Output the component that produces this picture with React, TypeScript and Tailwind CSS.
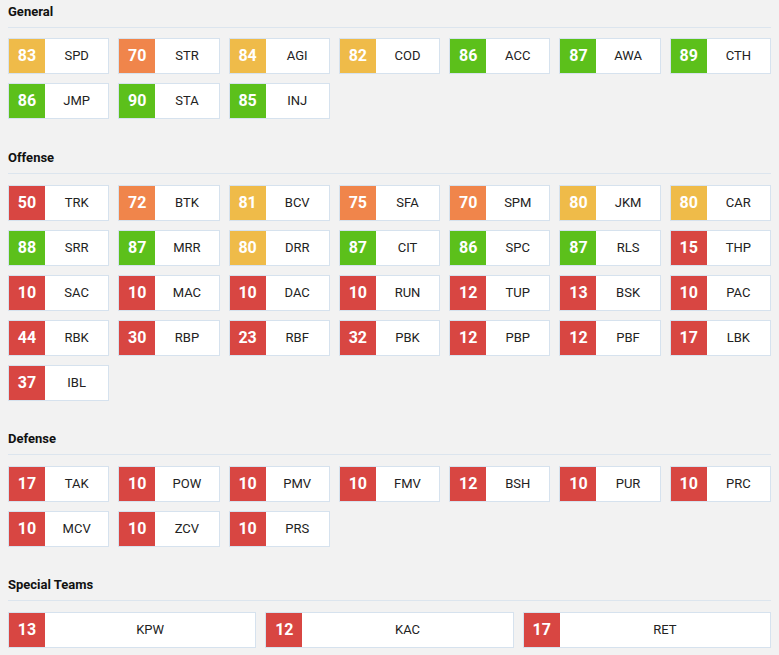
import React from "react";

type Stat = [number, string];

const general: Stat[] = [
  [83, "SPD"], [70, "STR"], [84, "AGI"], [82, "COD"], [86, "ACC"], [87, "AWA"], [89, "CTH"],
  [86, "JMP"], [90, "STA"], [85, "INJ"],
];
const offense: Stat[] = [
  [50, "TRK"], [72, "BTK"], [81, "BCV"], [75, "SFA"], [70, "SPM"], [80, "JKM"], [80, "CAR"],
  [88, "SRR"], [87, "MRR"], [80, "DRR"], [87, "CIT"], [86, "SPC"], [87, "RLS"], [15, "THP"],
  [10, "SAC"], [10, "MAC"], [10, "DAC"], [10, "RUN"], [12, "TUP"], [13, "BSK"], [10, "PAC"],
  [44, "RBK"], [30, "RBP"], [23, "RBF"], [32, "PBK"], [12, "PBP"], [12, "PBF"], [17, "LBK"],
  [37, "IBL"],
];
const defense: Stat[] = [
  [17, "TAK"], [10, "POW"], [10, "PMV"], [10, "FMV"], [12, "BSH"], [10, "PUR"], [10, "PRC"],
  [10, "MCV"], [10, "ZCV"], [10, "PRS"],
];
const special: Stat[] = [[13, "KPW"], [12, "KAC"], [17, "RET"]];

function colorFor(v: number) {
  if (v >= 85) return "bg-[#5cc01b]";
  if (v >= 80) return "bg-[#efbb49]";
  if (v >= 70) return "bg-[#f0854b]";
  return "bg-[#d84642]";
}

function Tile({ stat }: { stat: Stat }) {
  const [v, l] = stat;
  return (
    <div className="flex h-9 border border-[#d6e2ee] bg-white">
      <div
        className={`${colorFor(v)} w-9 shrink-0 flex items-center justify-center text-white font-bold text-[16px]`}
      >
        {v}
      </div>
      <div className="flex-1 flex items-center justify-center text-[13px] text-[#222]">{l}</div>
    </div>
  );
}

function Section({
  title,
  stats,
  cols,
  wrapClass,
  gridTop,
}: {
  title: string;
  stats: Stat[];
  cols: 7 | 3;
  wrapClass: string;
  gridTop: string;
}) {
  return (
    <div className={wrapClass}>
      <div className="text-[13px] font-bold leading-5 text-[#111] pb-[5px] border-b border-[#dce5ee]">
        {title}
      </div>
      <div className={`${cols === 7 ? "grid-cols-7" : "grid-cols-3"} grid gap-[9px] ${gridTop}`}>
        {stats.map((s) => (
          <Tile key={s[1]} stat={s} />
        ))}
      </div>
    </div>
  );
}

export default function App() {
  return (
    <div
      className="w-[779px] h-[655px] bg-[#f2f2f2] px-2 pt-[2px] overflow-hidden"
      style={{ fontFamily: "Roboto, 'Liberation Sans', sans-serif" }}
    >
      <Section title="General" stats={general} cols={7} wrapClass="" gridTop="mt-[10px]" />
      <Section title="Offense" stats={offense} cols={7} wrapClass="mt-[29px]" gridTop="mt-[11px]" />
      <Section title="Defense" stats={defense} cols={7} wrapClass="mt-[28px]" gridTop="mt-[11px]" />
      <Section title="Special Teams" stats={special} cols={3} wrapClass="mt-[28px]" gridTop="mt-[11px]" />
    </div>
  );
}
